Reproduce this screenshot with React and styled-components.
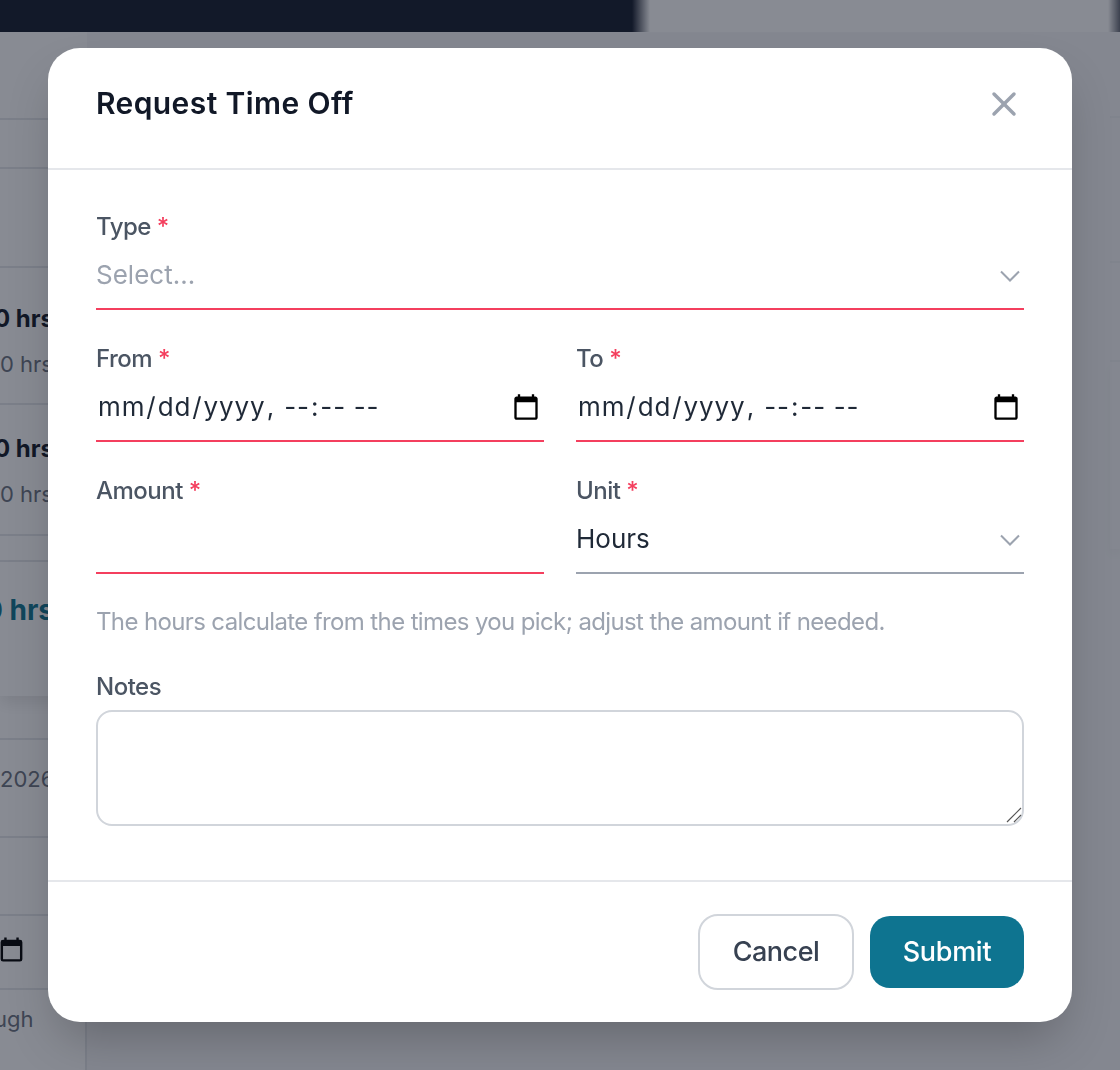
import React from "react";
import styled, { createGlobalStyle } from "styled-components";
import { X } from "lucide-react";

const GlobalStyle = createGlobalStyle`
  html, body { margin: 0; padding: 0; height: 100%; }
  body { font-family: "Inter", "Liberation Sans", sans-serif; background: #fff; }
  * { box-sizing: border-box; }
`;

function CalendarIcon() {
  return (
    <svg width="29" height="29" viewBox="0 0 24 24" aria-hidden="true">
      <path
        fill="#000"
        d="M19 4h-1V2h-2v2H8V2H6v2H5a2 2 0 0 0-2 2v14a2 2 0 0 0 2 2h14a2 2 0 0 0 2-2V6a2 2 0 0 0-2-2zm0 16H5V9h14v11z"
      />
    </svg>
  );
}

function Chevron() {
  return (
    <ChevronSvg width="20" height="12" viewBox="0 0 20 12" aria-hidden="true">
      <path d="M1 1.5l9 9 9-9" fill="none" stroke="#9ca3af" strokeWidth="2" />
    </ChevronSvg>
  );
}

export default function App() {
  return (
    <Page>
      <GlobalStyle />
      <BackPage>
        <TopStrip>
          <TopBar />
          <TopBarEnd />
        </TopStrip>
        <Main>
          <SideColumn>
            <Row $h={88} />
            <Row $h={49} />
            <Row $h={99} />
            <HoursRow $h={137} $top={37}>
              <Strong>0 hrs</Strong>
              <Muted>0 hrs</Muted>
            </HoursRow>
            <HoursRow $h={131} $top={30}>
              <Strong>0 hrs</Strong>
              <Muted>0 hrs</Muted>
            </HoursRow>
            <Row $h={26} />
            <TotalRow>
              <Teal>0 hrs</Teal>
            </TotalRow>
            <Row $h={44} />
            <YearRow $h={98}>
              <Muted>2026</Muted>
            </YearRow>
            <Row $h={78} />
            <IconRow $h={74}>
              <CalendarIcon />
            </IconRow>
            <LastRow>
              <Muted>ugh</Muted>
            </LastRow>
          </SideColumn>
          <RightColumn>
            <FaintRow $h={86} />
            <FaintRow $h={145} />
            <FaintRow $h={99} />
            <RightEnd />
          </RightColumn>
        </Main>
        <Overlay />
      </BackPage>
      <Modal>
        <ModalHeader>
          <Title>Request Time Off</Title>
          <CloseButton type="button" aria-label="Close">
            <X size={40} strokeWidth={2.1} />
          </CloseButton>
        </ModalHeader>
        <ModalBody>
          <Field>
            <Label>
              Type <Req>*</Req>
            </Label>
            <Control $invalid>
              <Placeholder>Select...</Placeholder>
              <Chevron />
            </Control>
          </Field>
          <TwoCols>
            <Field>
              <Label>
                From <Req>*</Req>
              </Label>
              <Control $invalid>
                <DateInput type="datetime-local" />
              </Control>
            </Field>
            <Field>
              <Label>
                To <Req>*</Req>
              </Label>
              <Control $invalid>
                <DateInput type="datetime-local" />
              </Control>
            </Field>
          </TwoCols>
          <TwoCols>
            <Field>
              <Label>
                Amount <Req>*</Req>
              </Label>
              <Control $invalid />
            </Field>
            <Field>
              <Label>
                Unit <Req>*</Req>
              </Label>
              <Control>
                <Value>Hours</Value>
                <Chevron />
              </Control>
            </Field>
          </TwoCols>
          <Hint>The hours calculate from the times you pick; adjust the amount if needed.</Hint>
          <Field>
            <NotesLabel>Notes</NotesLabel>
            <NotesWrap>
              <Notes />
              <Grip width="16" height="16" viewBox="0 0 16 16" aria-hidden="true">
                <path d="M1 15L15 1M8 15l7-7" stroke="#555" strokeWidth="1.2" fill="none" />
              </Grip>
            </NotesWrap>
          </Field>
        </ModalBody>
        <ModalFooter>
          <CancelButton type="button">Cancel</CancelButton>
          <SubmitButton type="button">Submit</SubmitButton>
        </ModalFooter>
      </Modal>
    </Page>
  );
}

const Page = styled.div`
  position: relative;
  width: 1120px;
  height: 1070px;
  overflow: hidden;
`;

const BackPage = styled.div`
  width: 100%;
  height: 100%;
  background: #f6f7f8;
`;

const TopStrip = styled.div`
  height: 32px;
  display: flex;
  justify-content: space-between;
  background: #fff;
`;

const TopBar = styled.div`
  width: 650px;
  background: linear-gradient(to right, #131a2b 632px, rgba(19, 26, 43, 0) 650px);
`;

const TopBarEnd = styled.div`
  width: 12px;
  background: linear-gradient(to right, rgba(19, 26, 43, 0), rgba(19, 26, 43, 0.65));
`;

const Main = styled.div`
  display: flex;
  justify-content: space-between;
`;

const SideColumn = styled.div`
  width: 87px;
  height: 1038px;
  background: #fff;
`;

const RightColumn = styled.div`
  width: 10px;
`;

const RightEnd = styled.div`
  height: 187px;
  box-shadow: 0 6px 10px rgba(0, 0, 0, 0.03);
`;

const Row = styled.div`
  height: ${(p) => p.$h}px;
  border-bottom: 2px solid #e5e7eb;
  display: flex;
  align-items: center;
`;

const FaintRow = styled(Row)`
  border-bottom-color: #eff0f2;
`;

const HoursRow = styled(Row)`
  flex-direction: column;
  align-items: flex-start;
  gap: 17px;
  padding-top: ${(p) => p.$top}px;
`;

const YearRow = styled(Row)`
  align-items: flex-start;
  padding-top: 25px;
`;

const IconRow = styled(Row)`
  padding-bottom: 6px;
  margin-left: -3px;
`;

const TotalRow = styled.div`
  height: 134px;
  padding-top: 34px;
  box-shadow: 0 8px 14px rgba(0, 0, 0, 0.09);
  white-space: nowrap;
`;

const LastRow = styled.div`
  padding-top: 15px;
  margin-left: -6px;
  height: 80px;
  border-right: 2px solid #e5e7eb;
`;

const Strong = styled.span`
  font-size: 24px;
  line-height: 28px;
  font-weight: 700;
  color: #111827;
  margin-left: -6px;
`;

const Muted = styled.span`
  font-size: 22px;
  line-height: 28px;
  color: #6b7280;
`;

const Teal = styled(Strong)`
  font-size: 28px;
  color: #0e7490;
  margin-left: -16px;
`;

const Overlay = styled.div`
  position: absolute;
  inset: 0;
  background: rgba(17, 24, 39, 0.5);
  backdrop-filter: blur(0.6px);
`;

const Modal = styled.div`
  position: absolute;
  left: 48px;
  top: 48px;
  width: 1024px;
  height: 974px;
  background: #fff;
  border-radius: 32px;
  box-shadow: 0 25px 50px -12px rgba(0, 0, 0, 0.25);
  display: flex;
  flex-direction: column;
`;

const ModalHeader = styled.div`
  height: 122px;
  flex: none;
  padding: 0 48px 8px;
  display: flex;
  align-items: center;
  justify-content: space-between;
  border-bottom: 2px solid #e5e7eb;
`;

const Title = styled.h2`
  margin: 0 0 2px;
  font-size: 30px;
  font-weight: 600;
  letter-spacing: 0.4px;
  color: #111827;
`;

const CloseButton = styled.button`
  border: 0;
  background: none;
  padding: 0;
  color: #9ca3af;
  display: flex;
`;

const ModalBody = styled.div`
  flex: 1;
  padding: 42px 48px 0;
  display: flex;
  flex-direction: column;
  gap: 34px;
`;

const Field = styled.div`
  display: flex;
  flex-direction: column;
  min-width: 0;
`;

const TwoCols = styled.div`
  display: grid;
  grid-template-columns: 1fr 1fr;
  gap: 32px;
`;

const Label = styled.label`
  font-size: 24px;
  line-height: 28px;
  height: 28px;
  padding-top: 1px;
  letter-spacing: -0.5px;
  color: #4b5563;
  font-weight: 500;
`;

const NotesLabel = styled(Label)`
  margin-bottom: 10px;
`;

const Req = styled.span`
  color: #f43f5e;
`;

const Control = styled.div`
  height: 70px;
  display: flex;
  align-items: center;
  justify-content: space-between;
  border-bottom: 2px solid ${(p) => (p.$invalid ? "#f43f5e" : "#9ca3af")};
`;

const ChevronSvg = styled.svg`
  margin-top: 3px;
  margin-right: 4px;
`;

const Placeholder = styled.span`
  font-size: 26px;
  color: #9ca3af;
`;

const Value = styled.span`
  font-size: 26px;
  color: #1f2937;
`;

const DateInput = styled.input`
  width: 100%;
  height: 100%;
  border: 0;
  padding: 0 0 0 1px;
  outline: none;
  background: transparent;
  font-family: "Inter", sans-serif;
  font-size: 26px;
  letter-spacing: 0.9px;
  color: #1f2937;

  &::-webkit-calendar-picker-indicator {
    width: 30px;
    height: 30px;
    padding: 0;
    margin: 3px 3px 0 0;
  }
`;

const Hint = styled.p`
  margin: -2px 0 0;
  font-size: 24px;
  line-height: 32px;
  letter-spacing: -0.63px;
  color: #9ca3af;
`;

const NotesWrap = styled.div`
  position: relative;
  height: 116px;
`;

const Notes = styled.textarea`
  display: block;
  height: 100%;
  width: 100%;
  border: 2px solid #d1d5db;
  border-radius: 16px;
  background: #fff;
  resize: none;
`;

const Grip = styled.svg`
  position: absolute;
  right: 2px;
  bottom: 3px;
`;

const ModalFooter = styled.div`
  flex: none;
  height: 142px;
  padding: 0 48px;
  display: flex;
  align-items: center;
  justify-content: flex-end;
  gap: 16px;
  border-top: 2px solid #e5e7eb;
`;

const CancelButton = styled.button`
  width: 156px;
  height: 76px;
  padding: 0 0 2px;
  border: 2px solid #d1d5db;
  border-radius: 20px;
  background: #fff;
  color: #374151;
  font: 500 27px "Inter", sans-serif;
  letter-spacing: -0.5px;
`;

const SubmitButton = styled.button`
  width: 154px;
  height: 72px;
  padding: 0 0 2px;
  border: 0;
  border-radius: 20px;
  background: #0e7490;
  color: #fff;
  font: 500 27px "Inter", sans-serif;
  letter-spacing: -0.3px;
`;
